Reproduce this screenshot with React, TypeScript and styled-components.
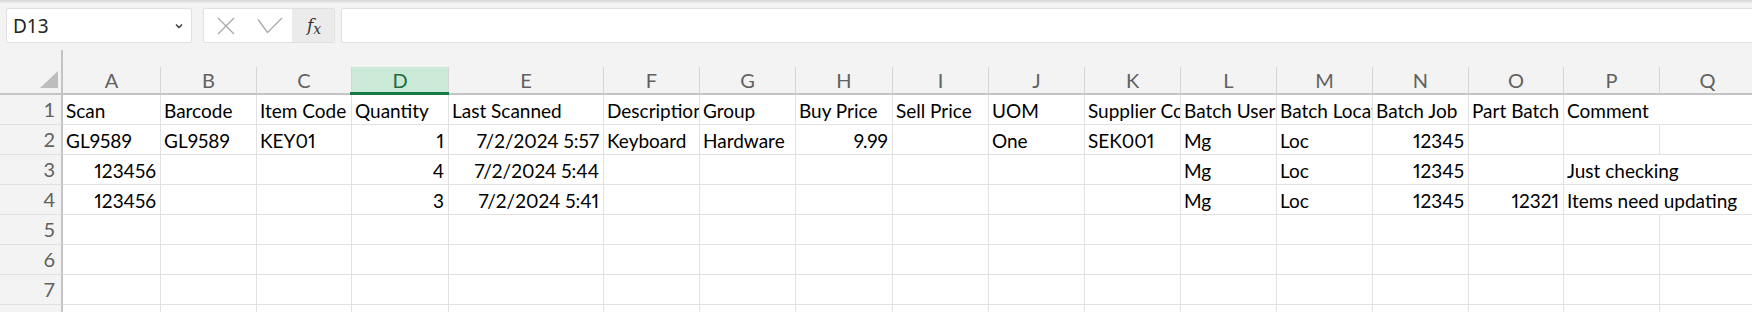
import * as React from 'react'
import styled, { createGlobalStyle } from 'styled-components'

const GlobalStyle = createGlobalStyle`
  html, body {
    margin: 0;
    padding: 0;
    background: #f3f3f3;
  }
`

const colors = {
  chrome: '#f3f3f3',
  grid: '#e1e1e1',
  headerLine: '#d6d6d6',
  headerEdge: '#c4c4c4',
  headerText: '#616161',
  selectedBg: '#cae9d6',
  selectedText: '#1b6e40',
  selectedBar: '#137a42',
  text: '#000000'
}

const Window = styled.div`
  width: 1752px;
  height: 312px;
  overflow: hidden;
  background: ${colors.chrome};
  font-family: Lato, 'Liberation Sans', sans-serif;
`
const TopShadow = styled.div`
  height: 3px;
  background: linear-gradient(#d4d4d4, #ececec);
`
const FormulaBar = styled.div`
  display: flex;
  align-items: stretch;
  height: 35px;
  padding: 5px 0 0 6px;
`
const NameBox = styled.div`
  width: 186px;
  box-sizing: border-box;
  background: #ffffff;
  border: 1px solid #e0e0e0;
  border-radius: 2px;
  display: flex;
  align-items: center;
  justify-content: space-between;
  padding: 0 8px 0 6px;
  font-family: 'Noto Sans', sans-serif;
  font-size: 19px;
  color: #242424;
`
const ButtonGroup = styled.div`
  width: 132px;
  margin-left: 11px;
  box-sizing: border-box;
  display: flex;
  background: #ffffff;
  border: 1px solid #e0e0e0;
  border-radius: 2px;
  overflow: hidden;
`
const IconButton = styled.div<{ $shaded?: boolean; $width: number }>`
  width: ${({ $width }) => $width}px;
  display: flex;
  align-items: center;
  justify-content: center;
  background: ${({ $shaded }) => ($shaded ? '#ebebeb' : 'transparent')};
`
const FxLabel = styled.span`
  font-family: 'DejaVu Serif', serif;
  font-style: italic;
  font-size: 17px;
  color: #333333;
  padding-left: 2px;
  & > sub {
    font-size: 14px;
    vertical-align: -3px;
  }
`
const FormulaInput = styled.div`
  flex: 1;
  margin-left: 6px;
  margin-right: -4px;
  background: #ffffff;
  border: 1px solid #e0e0e0;
  border-radius: 2px;
`
const Sheet = styled.div`
  margin-top: 7px;
`
const HeaderRow = styled.div`
  display: flex;
  align-items: flex-end;
`
const Corner = styled.div`
  width: 63px;
  height: 45px;
  box-sizing: border-box;
  flex-shrink: 0;
  border-right: 2px solid ${colors.headerEdge};
  border-bottom: 2px solid ${colors.headerEdge};
  display: flex;
  align-items: flex-end;
  justify-content: flex-end;
  padding: 0 3px 5px 0;
`
const ColumnHeader = styled.div<{ $width: number; $selected?: boolean }>`
  width: ${({ $width }) => $width}px;
  flex-shrink: 0;
  height: 28px;
  box-sizing: border-box;
  position: relative;
  border-right: 1px solid ${colors.headerLine};
  border-bottom: 2px solid ${colors.headerEdge};
  background: ${({ $selected }) => ($selected ? colors.selectedBg : colors.chrome)};
  color: ${({ $selected }) => ($selected ? colors.selectedText : colors.headerText)};
  font-size: 20px;
  line-height: 26px;
  text-align: center;
  &::after {
    content: '';
    display: ${({ $selected }) => ($selected ? 'block' : 'none')};
    position: absolute;
    left: -2px;
    right: -1px;
    bottom: -2px;
    height: 3px;
    background: ${colors.selectedBar};
  }
`
const Row = styled.div`
  display: flex;
  height: 30px;
`
const RowHeader = styled.div`
  width: 63px;
  flex-shrink: 0;
  box-sizing: border-box;
  border-right: 2px solid ${colors.headerEdge};
  border-bottom: 1px solid ${colors.grid};
  color: ${colors.headerText};
  font-size: 20px;
  line-height: 29px;
  text-align: right;
  padding-right: 6px;
`
const Cell = styled.div<{ $width: number; $align: 'left' | 'right'; $spill?: boolean }>`
  width: ${({ $width }) => $width}px;
  flex-shrink: 0;
  box-sizing: border-box;
  background: #ffffff;
  border-right: 1px solid ${({ $spill }) => ($spill ? '#ffffff' : colors.grid)};
  border-bottom: 1px solid ${colors.grid};
  padding: 3px 4px 0 3px;
  font-size: 19px;
  font-variant-numeric: proportional-nums;
  line-height: 26px;
  color: ${colors.text};
  white-space: nowrap;
  text-align: ${({ $align }) => $align};
  overflow: ${({ $spill }) => ($spill ? 'visible' : 'hidden')};
  position: ${({ $spill }) => ($spill ? 'relative' : 'static')};
  z-index: ${({ $spill }) => ($spill ? 1 : 'auto')};
`

const columns = [
  { key: 'A', width: 98 },
  { key: 'B', width: 96 },
  { key: 'C', width: 95 },
  { key: 'D', width: 97 },
  { key: 'E', width: 155 },
  { key: 'F', width: 96 },
  { key: 'G', width: 96 },
  { key: 'H', width: 97 },
  { key: 'I', width: 96 },
  { key: 'J', width: 96 },
  { key: 'K', width: 96 },
  { key: 'L', width: 96 },
  { key: 'M', width: 96 },
  { key: 'N', width: 96 },
  { key: 'O', width: 95 },
  { key: 'P', width: 96 },
  { key: 'Q', width: 96 }
]

// numbers are right aligned like excel does
const rows: (string | number)[][] = [
  ['Scan', 'Barcode', 'Item Code', 'Quantity', 'Last Scanned', 'Description', 'Group', 'Buy Price', 'Sell Price', 'UOM', 'Supplier Code', 'Batch User', 'Batch Location', 'Batch Job', 'Part Batch', 'Comment', ''],
  ['GL9589', 'GL9589', 'KEY01', 1, '7/2/2024 5:57', 'Keyboard', 'Hardware', 9.99, '', 'One', 'SEK001', 'Mg', 'Loc', 12345, '', '', ''],
  [123456, '', '', 4, '7/2/2024 5:44', '', '', '', '', '', '', 'Mg', 'Loc', 12345, '', 'Just checking', ''],
  [123456, '', '', 3, '7/2/2024 5:41', '', '', '', '', '', '', 'Mg', 'Loc', 12345, 12321, 'Items need updating', ''],
  [],
  [],
  [],
  []
]

const isRightAligned = (value: string | number) =>
  typeof value === 'number' || /^\d+\/\d+\/\d+/.test(value)

const CloseIcon = () => (
  <svg width="18" height="18" viewBox="0 0 18 18">
    <path d="M1 1 L17 17 M17 1 L1 17" stroke="#a9a9a9" strokeWidth="1.3" fill="none" />
  </svg>
)

const CheckIcon = () => (
  <svg width="26" height="17" viewBox="0 0 26 17">
    <path d="M1 2.5 L10.5 15.5 L25 1" stroke="#a9a9a9" strokeWidth="1.3" fill="none" />
  </svg>
)

const Chevron = () => (
  <svg width="8" height="6" viewBox="0 0 8 6">
    <path d="M1 1.5 L4 4.5 L7 1.5" stroke="#333333" strokeWidth="1.4" fill="none" />
  </svg>
)

const CornerTriangle = () => (
  <svg width="18" height="17" viewBox="0 0 18 17">
    <path d="M18 0 L18 17 L0 17 Z" fill="#bdbdbd" />
  </svg>
)

export default function App() {
  return (
    <Window>
      <GlobalStyle />
      <TopShadow />
      <FormulaBar>
        <NameBox>
          <span>D13</span>
          <Chevron />
        </NameBox>
        <ButtonGroup>
          <IconButton $width={44}>
            <CloseIcon />
          </IconButton>
          <IconButton $width={44}>
            <CheckIcon />
          </IconButton>
          <IconButton $width={42} $shaded>
            <FxLabel>
              f<sub>x</sub>
            </FxLabel>
          </IconButton>
        </ButtonGroup>
        <FormulaInput />
      </FormulaBar>
      <Sheet>
        <HeaderRow>
          <Corner>
            <CornerTriangle />
          </Corner>
          {columns.map(col => (
            <ColumnHeader key={col.key} $width={col.width} $selected={col.key === 'D'}>
              {col.key}
            </ColumnHeader>
          ))}
        </HeaderRow>
        {rows.map((row, r) => (
          <Row key={r}>
            <RowHeader>{r + 1}</RowHeader>
            {columns.map((col, c) => {
              const value = row[c] ?? ''
              const next = row[c + 1] ?? ''
              const spill = typeof value === 'string' && value.length > 0 && next === '' && col.key === 'P'
              return (
                <Cell
                  key={col.key}
                  $width={col.width}
                  $align={isRightAligned(value) ? 'right' : 'left'}
                  $spill={spill}
                >
                  {value}
                </Cell>
              )
            })}
          </Row>
        ))}
      </Sheet>
    </Window>
  )
}
